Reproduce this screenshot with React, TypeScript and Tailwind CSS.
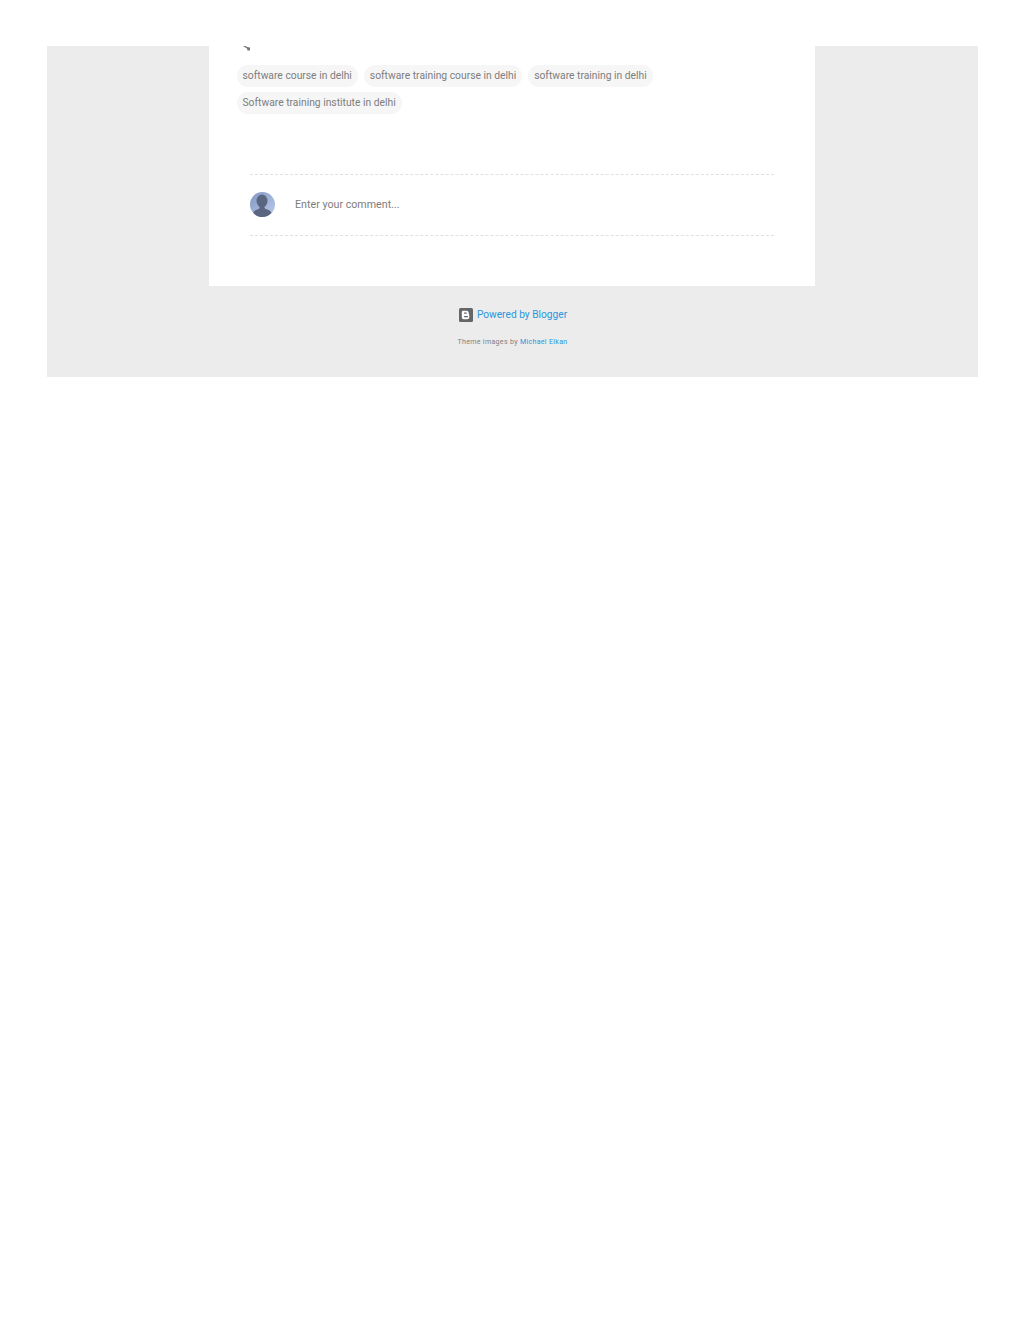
import React from 'react';

const labels = ['software course in delhi', 'software training course in delhi', 'software training in delhi', 'Software training institute in delhi'];

function Chip({ text }: { text: string }) {
    return (
        <span className="h-[22px] rounded-[11px] bg-[#f6f6f6] px-[6px] text-[10.300px] leading-[22px] text-[#7d7d7d] whitespace-nowrap">
            {text}
        </span>
    );
}

function Avatar() {
    return (
        <svg width="25" height="25" viewBox="0 0 25 25" className="shrink-0">
            <defs>
                <linearGradient id="avatarBg" x1="0" y1="0" x2="1" y2="1">
                    <stop offset="0" stopColor="#8196c2" />
                    <stop offset="1" stopColor="#bccbeb" />
                </linearGradient>
                <clipPath id="avatarClip">
                    <circle cx="12.5" cy="12.5" r="12.5" />
                </clipPath>
            </defs>
            <circle cx="12.5" cy="12.5" r="12.5" fill="url(#avatarBg)" />
            <g clipPath="url(#avatarClip)" fill="#5a6580">
                <ellipse cx="12" cy="9" rx="5.500" ry="6.500" />
                <path d="M9.500 13.500h5v2.500c.6 1 3.200 1.500 5 2.600 1.300.8 2 2 2.300 3.400v3h-19v-3c.3-1.400 1-2.600 2.300-3.400 1.800-1.100 4.400-1.600 4.400-2.600z" />
            </g>
        </svg>
    );
}

export default function App() {
    return (
        <div className="min-h-[1325px] bg-white pt-[46px] font-['Roboto',sans-serif]">
            <div className="ml-[47px] w-[931px] bg-[#ececec] pb-[30px]">
                <div className="ml-[162px] w-[606px] h-[240px] bg-white pl-[27.500px] pr-[40px]">
                    <svg width="8" height="5" viewBox="0 0 8 5" className="block ml-[6px]">
                        <path d="M0 0h2.500l1.500 1 3 .5v3h-2.500l-.5-2z" fill="#777" />
                    </svg>
                    <div className="mt-[14px] flex flex-wrap gap-x-[6px] gap-y-[5px]">
                        {labels.map(label => (
                            <Chip key={label} text={label} />
                        ))}
                    </div>
                    <div className="mt-[60px] ml-[13.500px] w-[524px] border-y border-dashed border-[#e0e0e0] h-[62px] pb-[2px] flex items-center gap-[20px]">
                        <Avatar />
                        <span className="pt-[2px] text-[10.700px] text-[#7d7d7d]">Enter your comment...</span>
                    </div>
                </div>
                <div className="mt-[22px] flex items-center justify-center gap-[4px] pl-[1px]">
                    <svg width="14" height="14" viewBox="0 0 14 14">
                        <rect width="14" height="14" rx="1.500" fill="#666" />
                        <path d="M4.200 2.800h3.300c1.300 0 2.200.9 2.200 2v.9c0 .5.600.4.600 1v2.600c0 1.200-1 2-2.100 2H4.800c-1.100 0-2-.9-2-2V4.200c0-.8.600-1.400 1.400-1.400zm.9 1.800v1.200h2.600V4.600zm0 3.300v1.300h3.800V7.900z" fill="#fff" fillRule="evenodd" />
                    </svg>
                    <a className="text-[10.200px] leading-[14px] text-[#2a96dc]">Powered by Blogger</a>
                </div>
                <p className="mt-[15px] text-center text-[7.100px] leading-[10px] tracking-[0.3px] text-[#808080]">
                    Theme images by <a className="text-[#2a96dc]">Michael Elkan</a>
                </p>
            </div>
        </div>
    );
}
